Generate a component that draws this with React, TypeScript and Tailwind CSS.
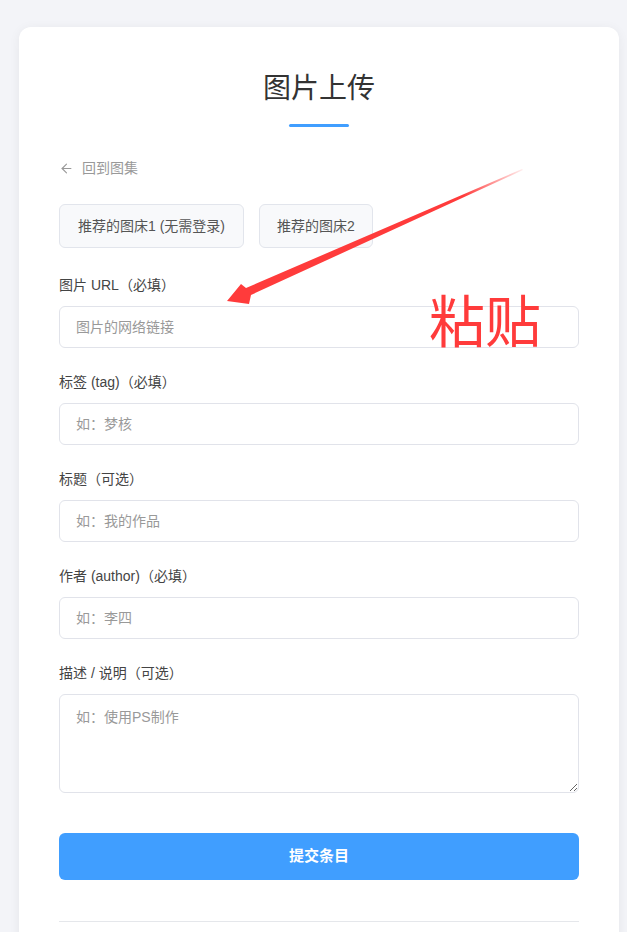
import { ArrowLeft } from "lucide-react";

const font = { fontFamily: '"Liberation Sans", "Noto Sans CJK SC", sans-serif' };

const fields = [
  { label: "图片 URL（必填）", placeholder: "图片的网络链接" },
  { label: "标签 (tag)（必填）", placeholder: "如：梦核" },
  { label: "标题（可选）", placeholder: "如：我的作品" },
  { label: "作者 (author)（必填）", placeholder: "如：李四" },
];

function Annotation() {
  return (
    <div className="pointer-events-none absolute inset-0">
      <svg width="627" height="932" className="absolute left-0 top-0">
        <defs>
          <linearGradient id="fade" x1="522" y1="170" x2="228" y2="300" gradientUnits="userSpaceOnUse">
            <stop offset="0" stopColor="#ff3b3b" stopOpacity="0.1" />
            <stop offset="0.2" stopColor="#ff3b3b" stopOpacity="1" />
            <stop offset="1" stopColor="#ff3b3b" />
          </linearGradient>
        </defs>
        <polygon
          points="227,301 241,284 246,288 522,169 523,170 251,295 249,304"
          fill="url(#fade)"
        />
      </svg>
      <div
        className="absolute left-[429px] top-[290px] text-[56px] leading-none text-[#ff3b3b]"
        style={{ fontFamily: '"Noto Sans CJK SC", sans-serif' }}
      >
        粘贴
      </div>
    </div>
  );
}

export default function App() {
  return (
    <div className="relative min-h-[932px] bg-[#f3f4f8] pt-[27px]" style={font}>
      <div className="ml-[19px] w-[600px] rounded-t-[12px] bg-white px-10 pb-10 pt-[41px] shadow-[0_2px_12px_rgba(0,0,0,0.06)]">
        <h1 className="text-center text-[28px] leading-[42px] font-normal text-[#333]">图片上传</h1>
        <div className="mx-auto mt-[14px] h-[3px] w-[60px] rounded-full bg-[#409eff]" />

        <div className="mt-[31px] flex h-5 items-center gap-2 text-[14px] text-[#999]">
          <ArrowLeft className="h-[15px] w-[15px]" strokeWidth={1.75} />
          <span>回到图集</span>
        </div>

        <div className="mt-[26px] flex gap-[15px]">
          <button className="h-[44px] rounded-[6px] border border-[#e2e5ec] bg-[#f8f9fb] px-[18px] text-[14px] text-[#555]">
            推荐的图床1 (无需登录)
          </button>
          <button className="h-[44px] rounded-[6px] border border-[#e2e5ec] bg-[#f8f9fb] px-[17px] text-[14px] text-[#555]">
            推荐的图床2
          </button>
        </div>

        <form className="mt-[27px]">
          {fields.map((f) => (
            <div key={f.label} className="mb-6">
              <label className="mb-[11px] block text-[14px] leading-5 text-[#444]">{f.label}</label>
              <input
                type="text"
                placeholder={f.placeholder}
                className="h-[42px] w-full rounded-[6px] border border-[#e1e3ea] px-4 text-[14px] text-[#333] outline-none placeholder:text-[#999]"
              />
            </div>
          ))}
          <div>
            <label className="mb-[11px] block text-[14px] leading-5 text-[#444]">描述 / 说明（可选）</label>
            <textarea
              placeholder="如：使用PS制作"
              className="block h-[99px] w-full rounded-[6px] border border-[#e1e3ea] px-4 py-3 text-[14px] leading-5 text-[#333] outline-none placeholder:text-[#999]"
            />
          </div>
          <button
            type="button"
            className="mt-10 h-[47px] w-full rounded-[6px] bg-[#409eff] text-[15px] font-bold text-white"
          >
            提交条目
          </button>
        </form>

        <div className="mt-[41px] h-px bg-[#e5e7eb]" />
      </div>
      <Annotation />
    </div>
  );
}
